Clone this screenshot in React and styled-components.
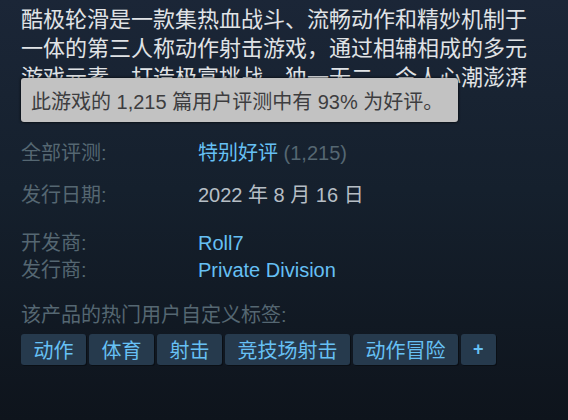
import React from 'react';
import styled, { createGlobalStyle } from 'styled-components';

const GlobalStyle = createGlobalStyle`
  html, body {
    margin: 0;
    padding: 0;
    background: #0f161f;
  }
  body {
    font-family: "Liberation Sans", "Noto Sans CJK SC", sans-serif;
  }
`;

const tags = ['动作', '体育', '射击', '竞技场射击', '动作冒险'];

const rows = [
  { label: '开发商:', value: 'Roll7' },
  { label: '发行商:', value: 'Private Division' },
];

export default function App() {
  return (
    <>
      <GlobalStyle />
      <Page>
        <Snippet>
          <Description>
            酷极轮滑是一款集热血战斗、流畅动作和精妙机制于一体的第三人称动作射击游戏，通过相辅相成的多元游戏元素，打造极富挑战、独一无二、令人心潮澎湃的滑板体验。
          </Description>
          <Tooltip>此游戏的 1,215 篇用户评测中有 93% 为好评。</Tooltip>
        </Snippet>

        <InfoRow $top={48}>
          <Label>全部评测:</Label>
          <Value>
            <Summary>特别好评</Summary> <Count>(1,215)</Count>
          </Value>
        </InfoRow>

        <InfoRow $top={15}>
          <Label>发行日期:</Label>
          <DateText>2022 年 8 月 16 日</DateText>
        </InfoRow>

        <DevBlock>
          {rows.map((r) => (
            <InfoRow key={r.label}>
              <Label>{r.label}</Label>
              <Link>{r.value}</Link>
            </InfoRow>
          ))}
        </DevBlock>

        <TagsTitle>该产品的热门用户自定义标签:</TagsTitle>
        <TagList>
          {tags.map((t) => (
            <Tag key={t}>{t}</Tag>
          ))}
          <Tag $plus>+</Tag>
        </TagList>
      </Page>
    </>
  );
}

const Page = styled.div`
  width: 568px;
  height: 420px;
  box-sizing: border-box;
  padding: 5px 27px 0 21px;
  background: linear-gradient(180deg, #1b2637 0%, #15202d 45%, #0e141c 100%);
  overflow: hidden;
`;

const Snippet = styled.div`
  position: relative;
`;

const Description = styled.div`
  font-size: 22px;
  line-height: 29px;
  height: 87px;
  overflow: hidden;
  color: #e0e3e6;
`;

const Tooltip = styled.div`
  position: absolute;
  top: 73px;
  left: 0;
  width: 437px;
  height: 44px;
  box-sizing: border-box;
  padding: 0 10px;
  display: flex;
  align-items: center;
  background: #c2c2c2;
  color: #3d3d3f;
  font-size: 20px;
  border-radius: 3px;
  box-shadow: 0 0 3px #000;
`;

const InfoRow = styled.div`
  display: grid;
  grid-template-columns: 177px 1fr;
  font-size: 20px;
  line-height: 27px;
  margin-top: ${(p) => p.$top || 0}px;
`;

const Label = styled.div`
  color: #556772;
`;

const Value = styled.div`
  color: #556772;
`;

const Summary = styled.span`
  color: #66c0f4;
`;

const Count = styled.span`
  color: #556772;
`;

const DateText = styled.div`
  color: #b6bec5;
`;

const Link = styled.div`
  color: #66c0f4;
`;

const DevBlock = styled.div`
  margin-top: 21px;
`;

const TagsTitle = styled.div`
  margin-top: 18px;
  font-size: 20px;
  line-height: 27px;
  color: #556772;
`;

const TagList = styled.div`
  display: flex;
  gap: 3px;
  margin-top: 5px;
`;

const Tag = styled.div`
  height: 31px;
  box-sizing: border-box;
  padding: 0 ${(p) => (p.$plus ? 12 : 12.5)}px;
  display: flex;
  align-items: center;
  background: #263a4d;
  color: #67c1f5;
  font-size: ${(p) => (p.$plus ? 18 : 20)}px;
  font-weight: ${(p) => (p.$plus ? 700 : 400)};
  border-radius: 3px;
  box-shadow: 1px 1px 0 #0a0f15;
`;
